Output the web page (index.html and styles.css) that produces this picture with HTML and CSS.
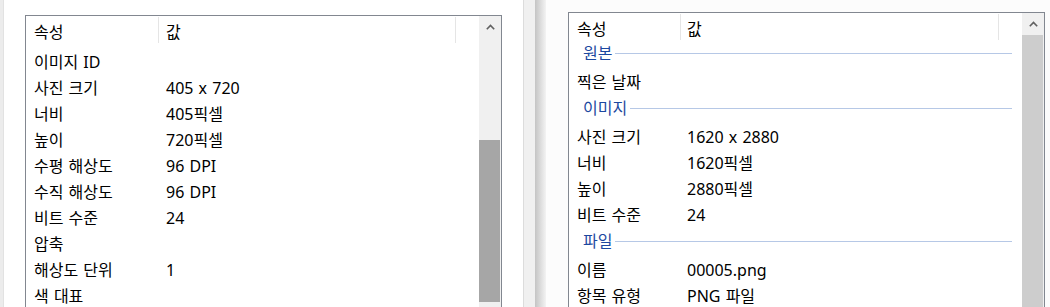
FILE: index.html
```html
<!DOCTYPE html>
<html lang="ko">

<head>
    <meta charset="UTF-8">
    <title>속성 - 자세히</title>
    <link rel="stylesheet" href="styles.css">
</head>

<body>
    <div class="screen">
        <div class="edge"></div>

        <!-- left window: details list, scrolled a little -->
        <section class="pane pane-left">
            <div class="list list-wide">
                <div class="list-main">
                    <div class="head">
                        <div class="hcell c1">속성</div>
                        <div class="hcell c2">값</div>
                    </div>
                    <div class="rows rows-scrolled">
                        <div class="row"><span class="k">이미지 ID</span><span class="v"></span></div>
                        <div class="row"><span class="k">사진 크기</span><span class="v">405 x 720</span></div>
                        <div class="row"><span class="k">너비</span><span class="v">405픽셀</span></div>
                        <div class="row"><span class="k">높이</span><span class="v">720픽셀</span></div>
                        <div class="row"><span class="k">수평 해상도</span><span class="v">96 DPI</span></div>
                        <div class="row"><span class="k">수직 해상도</span><span class="v">96 DPI</span></div>
                        <div class="row"><span class="k">비트 수준</span><span class="v">24</span></div>
                        <div class="row"><span class="k">압축</span><span class="v"></span></div>
                        <div class="row"><span class="k">해상도 단위</span><span class="v">1</span></div>
                        <div class="row"><span class="k">색 대표</span><span class="v"></span></div>
                    </div>
                </div>
                <div class="scrollbar">
                    <div class="arrow">
                        <svg width="9" height="6" viewBox="0 0 9 6"><polyline points="0.8,5.3 4.5,1.4 8.2,5.3" fill="none" stroke="#606060" stroke-width="1.6"/></svg>
                    </div>
                    <div class="track-gap"></div>
                    <div class="thumb thumb-dark"></div>
                </div>
            </div>
        </section>

        <div class="seam"></div>

        <!-- right window: grouped details list -->
        <section class="pane pane-right">
            <div class="list list-narrow">
                <div class="list-main">
                    <div class="head">
                        <div class="hcell c1">속성</div>
                        <div class="hcell c2">값</div>
                    </div>
                    <div class="rows">
                        <div class="group"><span>원본</span></div>
                        <div class="row"><span class="k">찍은 날짜</span><span class="v"></span></div>
                        <div class="group"><span>이미지</span></div>
                        <div class="row"><span class="k">사진 크기</span><span class="v">1620 x 2880</span></div>
                        <div class="row"><span class="k">너비</span><span class="v">1620픽셀</span></div>
                        <div class="row"><span class="k">높이</span><span class="v">2880픽셀</span></div>
                        <div class="row"><span class="k">비트 수준</span><span class="v">24</span></div>
                        <div class="group"><span>파일</span></div>
                        <div class="row"><span class="k">이름</span><span class="v">00005.png</span></div>
                        <div class="row"><span class="k">항목 유형</span><span class="v">PNG 파일</span></div>
                    </div>
                </div>
                <div class="scrollbar">
                    <div class="arrow">
                        <svg width="9" height="6" viewBox="0 0 9 6"><polyline points="0.8,5.3 4.5,1.4 8.2,5.3" fill="none" stroke="#606060" stroke-width="1.6"/></svg>
                    </div>
                    <div class="thumb thumb-light"></div>
                </div>
            </div>
        </section>
    </div>
</body>

</html>
```

FILE: styles.css
```css
* {
    box-sizing: border-box;
    margin: 0;
    padding: 0;
}

html, body {
    width: 1050px;
    height: 307px;
    overflow: hidden;
    background: #ffffff;
}

body {
    font-family: "Noto Sans", "Noto Sans CJK KR", sans-serif;
    font-size: 16px;
    color: #000;
}

.screen {
    display: flex;
    height: 307px;
}

.edge {
    width: 4px;
    background: #ececec;
    border-right: 1px solid #e2e2e2;
}

.pane {
    background: #fff;
}

.pane-left {
    width: 519px;
    padding: 15px 0 0 21px;
}

.pane-right {
    flex: 1;
    padding: 12px 0 0 22px;
    background: #fcfcfc;
}

.seam {
    width: 23px;
    background: linear-gradient(to right, #dcdcdc 0, #dcdcdc 1px, #f0f0f0 1px, #f0f0f0 12px, #c4c4c4 12px, #dedede 18px, #f3f3f3 23px);
}

/* list view, cut off by the bottom of the screen */
.list {
    width: 477px;
    border: 1px solid #828790;
    border-bottom: none;
    background: #fff;
    display: flex;
}

.pane-left .list { height: 292px; }
.pane-right .list { height: 295px; }

.list-main {
    flex: 1;
    overflow: hidden;
}

.head {
    display: flex;
    height: 27px;
}

.hcell {
    margin-top: 1px;
    height: 26px;
    line-height: 24px;
    padding-top: 3px;
    border-right: 1px solid #e5e5e5;
}

.hcell.c1 {
    padding-left: 8px;
}

.hcell.c2 {
    padding-left: 7px;
}

.list-wide .hcell.c1 { width: 133px; }
.list-wide .hcell.c2 { width: 297px; }
.list-narrow .hcell.c1 { width: 112px; }
.list-narrow .hcell.c2 { width: 318px; padding-left: 6px; }

.rows-scrolled {
    padding-top: 6px;
}

.row {
    display: flex;
    height: 26px;
    line-height: 26px;
    white-space: nowrap;
    word-spacing: 1px;
}

.row .k {
    padding-left: 8px;
}

.list-wide .row .k { width: 133px; }
.list-wide .row .v { padding-left: 7px; }
.list-narrow .row .k { width: 112px; }
.list-narrow .row .v { padding-left: 6px; }

.group {
    height: 29px;
    display: flex;
    align-items: center;
    padding: 0 10px 3px 14px;
    color: #1c48a0;
}

.group span {
    line-height: 26px;
}

.group::after {
    content: "";
    flex: 1;
    height: 1px;
    margin-left: 3px;
    background: #b6c8e6;
}

/* scroll bar */
.scrollbar {
    width: 22px;
    background: #f0f0f0;
    display: flex;
    flex-direction: column;
}

.arrow {
    height: 22px;
    display: flex;
    align-items: center;
    justify-content: center;
    padding-left: 1px;
}

.track-gap {
    height: 102px;
}

.thumb {
    margin: 0 1px 0 0;
}

.thumb-dark {
    height: 162px;
    background: #a6a6a6;
}

.thumb-light {
    flex: 1;
    background: #cdcdcd;
}
```
